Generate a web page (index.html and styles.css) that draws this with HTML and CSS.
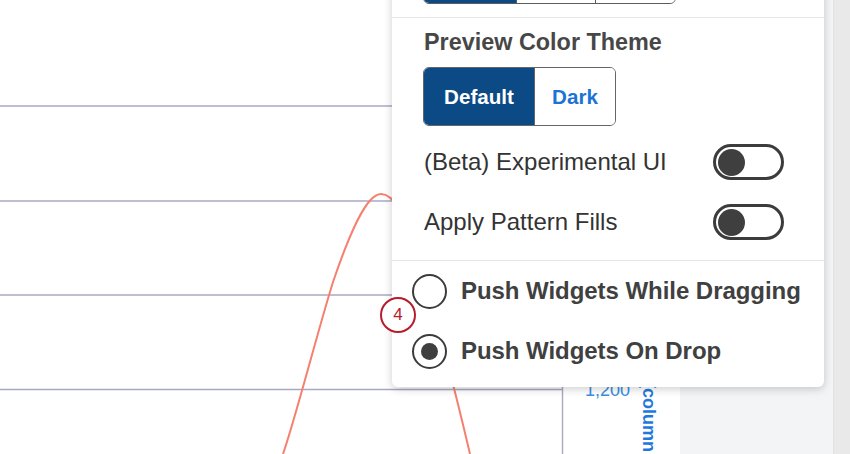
FILE: index.html
```html
<!DOCTYPE html>
<html lang="en">
<head>
<meta charset="utf-8">
<title>Dashboard preferences</title>
<link rel="stylesheet" href="styles.css">
</head>
<body>
<div class="screen">
  <div class="chart">
    <svg class="plot" width="680" height="454" viewBox="0 0 680 454" xmlns="http://www.w3.org/2000/svg">
      <g class="grid">
        <line x1="0" y1="106" x2="562" y2="106"/>
        <line x1="0" y1="201" x2="562" y2="201"/>
        <line x1="0" y1="295" x2="562" y2="295"/>
        <line x1="0" y1="389.5" x2="562" y2="389.5"/>
        <line x1="562.5" y1="0" x2="562.5" y2="454"/>
      </g>
      <path class="series" d="M283,454 C295,420 318,330 333,282 C349,235 366,194 381,194 C394,194 404,215 414,245 C428,290 448,360 470,454"/>
      <text class="axis-label" x="585" y="396">1,200</text>
      <text class="axis-title" transform="translate(643 382) rotate(90)">[column name]</text>
    </svg>
  </div>
  <div class="rail"></div>
  <div class="edge"></div>

  <div class="popover">
    <div class="section section-top">
      <div class="seg seg-top">
        <span class="seg-btn is-active"></span>
        <span class="seg-btn"></span>
        <span class="seg-btn"></span>
      </div>
    </div>
    <div class="section section-theme">
      <div class="heading">Preview Color Theme</div>
      <div class="seg seg-theme">
        <span class="seg-btn is-active">Default</span>
        <span class="seg-btn">Dark</span>
      </div>
      <div class="toggle-row">
        <span class="row-label">(Beta) Experimental UI</span>
        <span class="toggle"><span class="knob"></span></span>
      </div>
      <div class="toggle-row">
        <span class="row-label">Apply Pattern Fills</span>
        <span class="toggle"><span class="knob"></span></span>
      </div>
    </div>
    <div class="section section-radio">
      <div class="radio-row"><span class="radio"></span><span class="radio-label">Push Widgets While Dragging</span></div>
      <div class="radio-row"><span class="radio is-checked"><span class="dot"></span></span><span class="radio-label">Push Widgets On Drop</span></div>
    </div>
  </div>

  <div class="badge">4</div>
</div>
</body>
</html>
```

FILE: styles.css
```css
html, body {
  margin: 0;
  padding: 0;
  background: #ffffff;
}

body {
  font-family: "Liberation Sans", Arial, sans-serif;
  color: #333333;
}

.screen {
  position: relative;
  display: flex;
  width: 850px;
  height: 454px;
  overflow: hidden;
}

.chart {
  width: 680px;
  height: 454px;
  background: #ffffff;
  flex: none;
}

.plot {
  display: block;
}

.grid line {
  stroke: #a7a9c3;
  stroke-width: 1.4;
}

.series {
  fill: none;
  stroke: #f6806f;
  stroke-width: 2;
}

.axis-label {
  font-family: "Liberation Sans", Arial, sans-serif;
  font-size: 18px;
  fill: #3a8ee3;
}

.axis-title {
  font-family: "Liberation Sans", Arial, sans-serif;
  font-size: 18px;
  font-weight: bold;
  fill: #1f78de;
}

.rail {
  width: 153px;
  flex: none;
  background: #f3f4f6;
}

.edge {
  flex: 1;
  background: #e9e9ea;
  border-left: 1px solid #e2e2e3;
}

/* popover */
.popover {
  position: absolute;
  left: 392px;
  top: -56px;
  width: 432px;
  background: #ffffff;
  border-radius: 6px;
  box-shadow: 0 2px 9px rgba(0, 0, 0, 0.2);
}

.section {
  border-bottom: 1px solid #e6e6e6;
}

.section:last-child {
  border-bottom: none;
}

.section-top {
  padding: 16px 0 13px 31px;
}

.seg {
  display: inline-flex;
  border: 1px solid #5c5c5c;
  border-radius: 6px;
  overflow: hidden;
  vertical-align: top;
}

.seg-btn {
  display: flex;
  align-items: center;
  justify-content: center;
  background: #ffffff;
  border-left: 1px solid #5c5c5c;
  box-sizing: border-box;
}

.seg-btn:first-child {
  border-left: none;
}

.seg-btn.is-active {
  background: #0c4a86;
  color: #ffffff;
}

.seg-top {
  height: 44px;
  box-sizing: border-box;
}

.seg-top .seg-btn:nth-child(1) { width: 92px; }
.seg-top .seg-btn:nth-child(2) { width: 79px; }
.seg-top .seg-btn:nth-child(3) { width: 80px; }

.section-theme {
  padding: 10px 40px 8px 31px;
}

.heading {
  font-size: 23.4px;
  line-height: 28px;
  font-weight: bold;
  color: #474747;
  padding-left: 1px;
}

.seg-theme {
  margin-top: 11px;
  height: 59px;
  box-sizing: border-box;
  border-color: #666666;
}

.seg-theme .seg-btn {
  font-size: 20.6px;
  font-weight: bold;
  color: #1b73d6;
  border-left-color: #666666;
}

.seg-theme .seg-btn.is-active {
  color: #ffffff;
}

.seg-theme .seg-btn:nth-child(1) { width: 110px; }
.seg-theme .seg-btn:nth-child(2) { width: 81px; }

.toggle-row {
  display: flex;
  align-items: center;
  justify-content: space-between;
  height: 60px;
}

.seg-theme + .toggle-row {
  margin-top: 6px;
}

.row-label {
  font-size: 24px;
  color: #333333;
  padding-left: 1px;
}

.toggle {
  display: flex;
  align-items: center;
  width: 71px;
  height: 36px;
  box-sizing: border-box;
  border: 3px solid #3c3c3c;
  border-radius: 18px;
  padding: 0 2px;
}

.knob {
  width: 27px;
  height: 27px;
  border-radius: 50%;
  background: #3f3f3f;
}

.section-radio {
  padding: 0 0 6px 20px;
}

.radio-row {
  display: flex;
  align-items: center;
  height: 60px;
}

.radio {
  display: flex;
  align-items: center;
  justify-content: center;
  width: 35px;
  height: 35px;
  box-sizing: border-box;
  border: 2.5px solid #3c3c3c;
  border-radius: 50%;
  margin-right: 14px;
  flex: none;
}

.dot {
  width: 17px;
  height: 17px;
  border-radius: 50%;
  background: #3f3f3f;
}

.radio-label {
  font-size: 24px;
  font-weight: bold;
  color: #404040;
  letter-spacing: -0.05px;
}

/* step marker */
.badge {
  position: absolute;
  left: 380px;
  top: 297px;
  width: 36px;
  height: 36px;
  box-sizing: border-box;
  border: 2.6px solid #b71c2d;
  border-radius: 50%;
  background: #ffffff;
  color: #b71c2d;
  font-size: 17px;
  display: flex;
  align-items: center;
  justify-content: center;
  z-index: 2;
}
```
